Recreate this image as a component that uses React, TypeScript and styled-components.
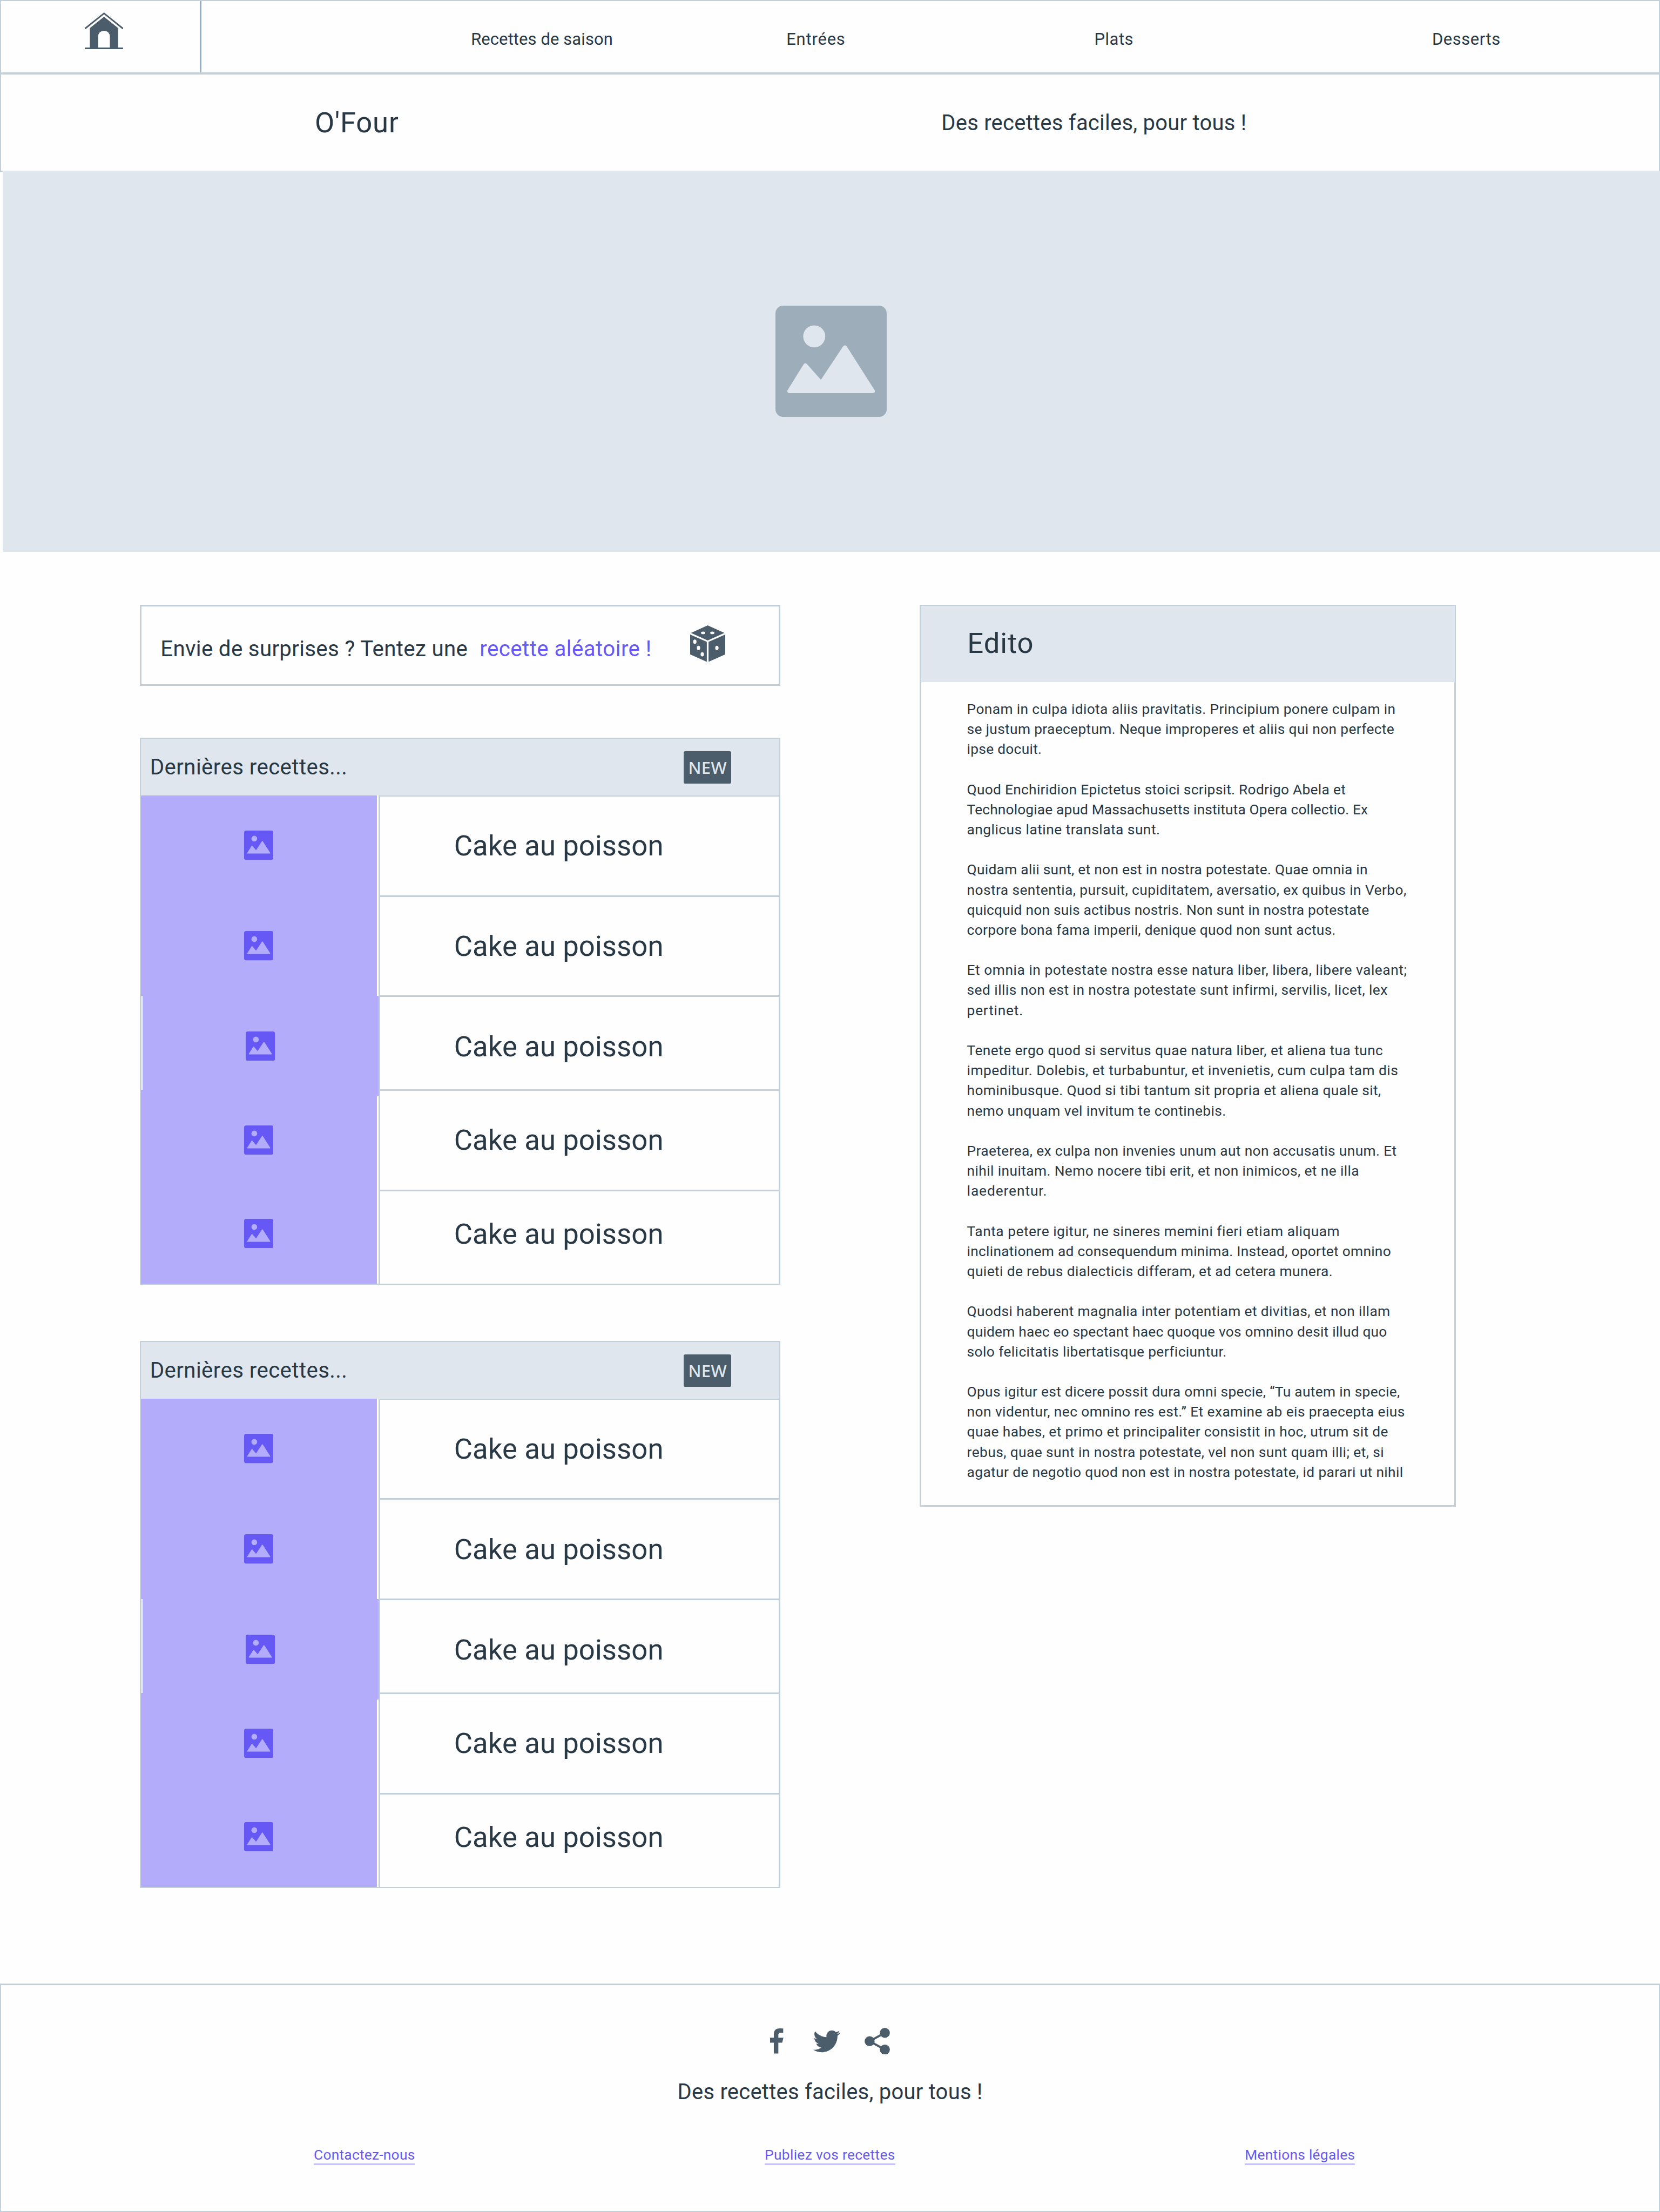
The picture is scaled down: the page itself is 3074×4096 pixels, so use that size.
import React from "react";
import styled, { createGlobalStyle } from "styled-components";
import { FaTwitter } from "react-icons/fa";

/* Converts a length of the 3968-wide design grid to page pixels. */
const u = (n: number) => `${+(n * 0.7746).toFixed(3)}px`;

const c = {
  ink: "#293845",
  slate: "#4b5c6b",
  steel: "#9eadba",
  line: "#c3cfd9",
  mist: "#dfe6ed",
  violet: "#6558f5",
  lilac: "#b2acfa",
  underline: "#c7c2fc",
};

const GlobalStyle = createGlobalStyle`
  *, *::before, *::after { box-sizing: border-box; }
  body {
    margin: 0;
    background: #fefefe;
    color: ${c.ink};
    font-family: Roboto, "Liberation Sans", sans-serif;
    font-variant-ligatures: none;
  }
  svg { display: block; flex: none; }
  a { color: inherit; text-decoration: none; }
`;

const Page = styled.div`
  width: 3074px;
  height: 4096px;
  overflow: hidden;
  display: flex;
  flex-direction: column;
  background: #fefefe;
`;

/* ---------- text ---------- */

const Text = styled.span<{ $size: number; $leading: number; $track?: number; $color?: string }>`
  display: block;
  white-space: pre;
  font-size: ${(p) => u(p.$size)};
  line-height: ${(p) => u(p.$leading)};
  letter-spacing: ${(p) => p.$track ?? 0}em;
  color: ${(p) => p.$color ?? "inherit"};
`;

/* ---------- header ---------- */

const TopBar = styled.header`
  display: flex;
  height: ${u(176)};
  border: 2px solid ${c.line};
  flex: none;
`;

const HomeCell = styled.a`
  width: ${u(479)};
  padding: ${u(27)} 0 0 ${u(199.5)};
  border-right: 3px solid ${c.steel};
`;

const Nav = styled.nav`
  flex: 1;
  display: grid;
  grid-template-columns: ${u(656)} ${u(654)} ${u(771)} ${u(914)};
  padding: ${u(10.5)} 0 0 ${u(486)};
  align-items: center;
  justify-items: center;
`;

const TitleBar = styled.section`
  display: grid;
  grid-template-columns: ${u(1498)} auto;
  align-items: center;
  height: ${u(234)};
  padding: ${u(3)} 0 0 ${u(750)};
  border: 2px solid ${c.line};
  flex: none;
`;

const Hero = styled.section`
  display: flex;
  align-items: center;
  justify-content: center;
  height: ${u(911)};
  margin: ${u(-2)} 0 0 ${u(6)};
  padding: ${u(1)} ${u(2)} 0 0;
  background: ${c.mist};
  flex: none;
`;

/* ---------- main ---------- */

const Main = styled.main`
  display: flex;
  align-items: flex-start;
  height: ${u(3423)};
  padding: ${u(126.6)} 0 0 ${u(334)};
  flex: none;
`;

const Column = styled.div`
  display: flex;
  flex-direction: column;
  width: ${u(1532)};
  margin-right: ${u(332)};
`;

const Surprise = styled.section`
  display: grid;
  grid-template-columns: ${u(763)} ${u(502.5)} auto;
  align-items: center;
  height: ${u(194)};
  padding-left: ${u(46)};
  margin-bottom: ${u(124)};
  border: 3px solid ${c.line};
`;

const Lowered = styled.div`
  padding-top: ${u(19)};
`;

const Raised = styled.div`
  padding-bottom: ${u(9)};
`;

const List = styled.section`
  height: ${u(1308)};
  margin-bottom: ${u(134)};
  border: 2px solid ${c.line};
`;

const ListHeader = styled.div`
  display: flex;
  align-items: center;
  justify-content: space-between;
  height: ${u(135)};
  padding: ${u(2)} ${u(115.5)} 0 ${u(22)};
  background: ${c.mist};
`;

const Badge = styled.span`
  display: flex;
  align-items: center;
  justify-content: center;
  width: ${u(113)};
  height: ${u(77)};
  border-radius: ${u(4)};
  background: ${c.slate};
  color: ${c.mist};
  font: 500 ${u(40)}/${u(60)} "Noto Sans", sans-serif;
  letter-spacing: 0.01em;
`;

const ListBody = styled.div`
  display: grid;
  grid-template-columns: ${u(568)} 1fr;
`;

const Thumbs = styled.div`
  display: flex;
  flex-direction: column;
  height: ${u(1168)};
  border-left: 1px solid ${c.line};
`;

const Thumb = styled.div<{ $shifted?: boolean; $overlap?: boolean }>`
  display: flex;
  align-items: center;
  justify-content: center;
  flex: none;
  width: ${u(564)};
  height: ${u(240)};
  margin-left: ${(p) => (p.$shifted ? "2px" : "-1px")};
  margin-bottom: ${(p) => (p.$overlap ? u(-16) : 0)};
  background: ${c.lilac};
`;

const Names = styled.div`
  border-left: 3px solid ${c.line};
  border-right: 1px solid ${c.line};
  border-top: 2px solid ${c.line};
`;

const Name = styled.div<{ $height: number; $top: number; $last?: boolean }>`
  height: ${(p) => u(p.$height)};
  padding: ${(p) => u(p.$top)} 0 0 ${u(177)};
  border-bottom: ${(p) => (p.$last ? 1 : 3)}px solid ${c.line};
`;

const Edito = styled.aside`
  width: ${u(1282)};
  height: ${u(2156)};
  border: 3px solid ${c.line};
`;

const EditoHeader = styled.div`
  display: flex;
  align-items: center;
  height: ${u(182)};
  margin: -1px -1px 0;
  padding-left: ${u(112)};
  background: ${c.mist};
`;

const EditoBody = styled.div`
  padding: ${u(41.5)} 0 0 ${u(109.8)};
`;

const Paragraph = styled.p`
  margin: 0 0 ${u(48)};
`;

/* ---------- footer ---------- */

const Footer = styled.footer`
  display: flex;
  flex-direction: column;
  align-items: center;
  flex: 1;
  padding-top: ${u(101.5)};
  border: 2px solid ${c.line};
  border-top-width: 3px;
`;

const Social = styled.div`
  display: grid;
  grid-template-columns: ${u(104)} ${u(122)} ${u(61)};
  align-items: center;
  height: ${u(64)};
  margin-bottom: ${u(60.4)};
  color: ${c.slate};
`;

const Links = styled.nav`
  align-self: stretch;
  display: grid;
  grid-template-columns: ${u(1078)} ${u(1148)} auto;
  justify-items: start;
  margin-top: ${u(99.5)};
  padding-left: ${u(747.5)};
`;

const FooterLink = styled.a`
  color: ${c.violet};
  border-bottom: 3px solid ${c.underline};
`;

/* ---------- drawings ---------- */

const size = (n: number) => n * 0.7746;

const PictureIcon = ({ width, fill, cut }: { width: number; fill: string; cut: string }) => (
  <svg width={size(width)} height={size(width)} viewBox="0 0 798 798">
    <rect width="798" height="798" rx="55" fill={fill} />
    <circle cx="278" cy="220.5" r="79" fill={cut} />
    <path
      fill={cut}
      d="M100 627H698C712 627 717 615 710 604L512 293C505 282 491 282 484 293L326 532L227 420C219 411 208 411 201 422L88 604C81 615 87 627 100 627Z"
    />
  </svg>
);

const HouseIcon = () => (
  <svg width={size(92)} height={size(88)} viewBox="0 0 92 88" fill={c.slate}>
    <path d="M46 0L91.3 36.2Q92 36.8 92 37.6V40H90L46 4.6L2 40H0V37.6Q0 36.8 .7 36.2Z" />
    <path d="M46 10.2L79.8 37.6V84H60V57.6C60 49 54 43.8 46 43.8S32 49 32 57.6V84H12.2V37.6Z" />
    <rect y="84" width="92" height="4" rx="1" />
  </svg>
);

const DiceIcon = () => (
  <svg width={size(84)} height={size(87.2)} viewBox="0 0 84 87.2" fill={c.slate}>
    <path d="M42 0L82 18L42 36L2 18ZM0 21.8L39.9 39.4V87.2L0 69.3ZM44 39.4L84 21.8V69.3L44 87.2Z" />
    <g fill="#fefefe">
      <ellipse cx="31" cy="18" rx="5" ry="3" />
      <ellipse cx="53" cy="18" rx="5" ry="3" />
      <ellipse cx="11.2" cy="39" rx="4" ry="5.1" />
      <ellipse cx="20" cy="54" rx="4" ry="5.1" />
      <ellipse cx="29" cy="69.2" rx="4" ry="5.1" />
      <ellipse cx="64" cy="54" rx="4" ry="5.1" />
    </g>
  </svg>
);

const FacebookIcon = () => (
  <svg width={size(32)} height={size(60)} viewBox="0 0 32 60" fill="currentColor">
    <path d="M31.4.5V10.2H25C21 10.2 19.8 12.5 19.8 16V22.2H32L29 34.2H19.8V60H9V34.2H0V22.2H9V14C9 5 14 0 22.5 0C27 0 31.4.5 31.4.5Z" />
  </svg>
);

const ShareIcon = () => (
  <svg width={size(60.6)} height={size(64)} viewBox="0 0 60.6 64" fill="currentColor">
    <path d="M48.5 12L12.1 32L48.5 52" fill="none" stroke="currentColor" strokeWidth="5" />
    <circle cx="48.5" cy="12" r="12" />
    <circle cx="12.1" cy="32" r="12" />
    <circle cx="48.5" cy="52" r="12" />
  </svg>
);

/* ---------- content ---------- */

/* Each line carries the tracking that sets its measure. */
const edito: [string, number][][] = [
  [
    ["Ponam in culpa idiota aliis pravitatis. Principium ponere culpam in", 0.0142],
    ["se justum praeceptum. Neque improperes et aliis qui non perfecte", 0.0128],
    ["ipse docuit.", 0.0104],
  ],
  [
    ["Quod Enchiridion Epictetus stoici scripsit. Rodrigo Abela et", 0.0106],
    ["Technologiae apud Massachusetts instituta Opera collectio. Ex", 0.0052],
    ["anglicus latine translata sunt.", 0.0175],
  ],
  [
    ["Quidam alii sunt, et non est in nostra potestate. Quae omnia in", 0.0104],
    ["nostra sententia, pursuit, cupiditatem, aversatio, ex quibus in Verbo,", 0.0157],
    ["quicquid non suis actibus nostris. Non sunt in nostra potestate", 0.0081],
    ["corpore bona fama imperii, denique quod non sunt actus.", 0.0114],
  ],
  [
    ["Et omnia in potestate nostra esse natura liber, libera, libere valeant;", 0.0203],
    ["sed illis non est in nostra potestate sunt infirmi, servilis, licet, lex", 0.0169],
    ["pertinet.", 0.0293],
  ],
  [
    ["Tenete ergo quod si servitus quae natura liber, et aliena tua tunc", 0.0156],
    ["impeditur. Dolebis, et turbabuntur, et invenietis, cum culpa tam dis", 0.0181],
    ["hominibusque. Quod si tibi tantum sit propria et aliena quale sit,", 0.0139],
    ["nemo unquam vel invitum te continebis.", 0.0143],
  ],
  [
    ["Praeterea, ex culpa non invenies unum aut non accusatis unum. Et", 0.0139],
    ["nihil inuitam. Nemo nocere tibi erit, et non inimicos, et ne illa", 0.0151],
    ["laederentur.", 0.034],
  ],
  [
    ["Tanta petere igitur, ne sineres memini fieri etiam aliquam", 0.0191],
    ["inclinationem ad consequendum minima. Instead, oportet omnino", 0.0103],
    ["quieti de rebus dialecticis differam, et ad cetera munera.", 0.0149],
  ],
  [
    ["Quodsi haberent magnalia inter potentiam et divitias, et non illam", 0.0144],
    ["quidem haec eo spectant haec quoque vos omnino desit illud quo", 0.0076],
    ["solo felicitatis libertatisque perficiuntur.", 0.0154],
  ],
  [
    ["Opus igitur est dicere possit dura omni specie, “Tu autem in specie,", 0.012],
    ["non videntur, nec omnino res est.” Et examine ab eis praecepta eius", 0.016],
    ["quae habes, et primo et principaliter consistit in hoc, utrum sit de", 0.0144],
    ["rebus, quae sunt in nostra potestate, vel non sunt quam illi; et, si", 0.0158],
    ["agatur de negotio quod non est in nostra potestate, id parari ut nihil", 0.0138],
  ],
];

const navItems: [string, number][] = [
  ["Recettes de saison", 0.003],
  ["Entrées", 0.026],
  ["Plats", 0.0161],
  ["Desserts", 0.0171],
];

const footerLinks: [string, number][] = [
  ["Contactez-nous", 0.0095],
  ["Publiez vos recettes", 0.0125],
  ["Mentions légales", 0.0105],
];

const recipes = [
  { name: "Cake au poisson", height: 240, top: 79 },
  { name: "Cake au poisson", height: 240, top: 79 },
  { name: "Cake au poisson", height: 224, top: 79, shifted: true, overlap: true },
  { name: "Cake au poisson", height: 240, top: 79, overlap: true },
  { name: "Cake au poisson", height: 223, top: 63, last: true },
];

const Slogan = () => (
  <Text $size={51.6} $leading={60} $track={0.0062}>
    Des recettes faciles, pour tous !
  </Text>
);

const RecipeList = () => (
  <List>
    <ListHeader>
      <Text $size={52} $leading={60} $track={0.0095}>
        Dernières recettes...
      </Text>
      <Badge>NEW</Badge>
    </ListHeader>
    <ListBody>
      <Thumbs>
        {recipes.map((r, i) => (
          <Thumb key={i} $shifted={r.shifted} $overlap={r.overlap}>
            <PictureIcon width={70} fill={c.violet} cut={c.lilac} />
          </Thumb>
        ))}
      </Thumbs>
      <Names>
        {recipes.map((r, i) => (
          <Name key={i} $height={r.height} $top={r.top} $last={r.last}>
            <Text $size={68} $leading={80} $track={0.0015}>
              {r.name}
            </Text>
          </Name>
        ))}
      </Names>
    </ListBody>
  </List>
);

export default function App() {
  return (
    <>
      <GlobalStyle />
      <Page>
        <TopBar>
          <HomeCell>
            <HouseIcon />
          </HomeCell>
          <Nav>
            {navItems.map(([label, track]) => (
              <Text key={label} $size={40} $leading={48} $track={track}>
                {label}
              </Text>
            ))}
          </Nav>
        </TopBar>
        <TitleBar>
          <Text $size={68} $leading={80} $track={0.0148}>
            O'Four
          </Text>
          <Slogan />
        </TitleBar>
        <Hero>
          <PictureIcon width={266} fill={c.steel} cut={c.mist} />
        </Hero>
        <Main>
          <Column>
            <Surprise>
              <Lowered>
                <Text $size={52} $leading={60} $track={0.0074}>
                  Envie de surprises ? Tentez une
                </Text>
              </Lowered>
              <Lowered>
                <Text $size={52} $leading={60} $track={0.0105} $color={c.violet}>
                  recette aléatoire !
                </Text>
              </Lowered>
              <Raised>
                <DiceIcon />
              </Raised>
            </Surprise>
            <RecipeList />
            <RecipeList />
          </Column>
          <Edito>
            <EditoHeader>
              <Text $size={68} $leading={80} $track={0.0175}>
                Edito
              </Text>
            </EditoHeader>
            <EditoBody>
              {edito.map((lines, i) => (
                <Paragraph key={i}>
                  {lines.map(([line, track]) => (
                    <Text key={line} $size={34} $leading={48} $track={track}>
                      {line}
                    </Text>
                  ))}
                </Paragraph>
              ))}
            </EditoBody>
          </Edito>
        </Main>
        <Footer>
          <Social>
            <FacebookIcon />
            <FaTwitter size={size(64.4)} />
            <ShareIcon />
          </Social>
          <Slogan />
          <Links>
            {footerLinks.map(([label, track]) => (
              <FooterLink key={label} href="#">
                <Text $size={34} $leading={40} $track={track}>
                  {label}
                </Text>
              </FooterLink>
            ))}
          </Links>
        </Footer>
      </Page>
    </>
  );
}
